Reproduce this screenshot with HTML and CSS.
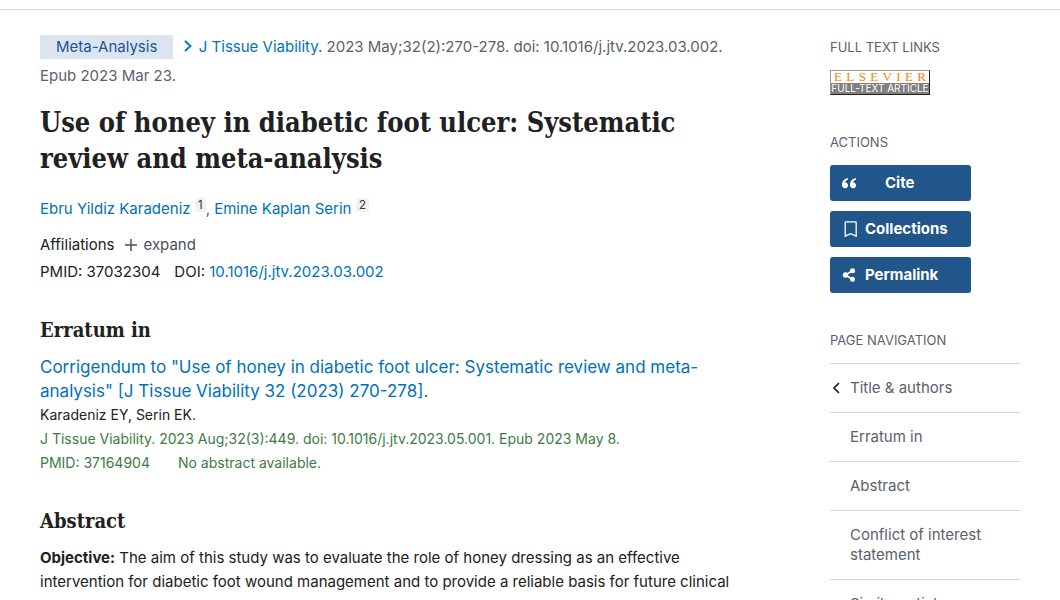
FILE: index.html
```
<!DOCTYPE html>
<html lang="en">
<head>
  <meta charset="utf-8">
  <meta name="viewport" content="width=device-width, initial-scale=1">
  <title>Use of honey in diabetic foot ulcer: Systematic review and meta-analysis</title>
  <link rel="stylesheet" href="styles.css">
</head>
<body>
  <div class="top-rule"></div>
  <div class="page">
    <main class="article">
      <header>
        <div class="citation">
          <span class="pub-type">Meta-Analysis</span>
          <svg class="chevron" viewBox="0 0 8 12" aria-hidden="true"><path d="M1 1l5.500 5L1 11" fill="none" stroke="currentColor" stroke-width="1.800"/></svg>
          <a href="#journal">J Tissue Viability.</a>
          2023 May;32(2):270-278. doi: 10.1016/j.jtv.2023.03.002. Epub&nbsp;2023 Mar 23.
        </div>
        <h1 id="title">Use of honey in diabetic foot ulcer: Systematic review and meta-analysis</h1>
        <div class="authors">
          <a href="#author-1">Ebru Yildiz Karadeniz</a> <sup><a href="#affiliation-1">1</a></sup>,
          <a href="#author-2">Emine Kaplan Serin</a> <sup><a href="#affiliation-2">2</a></sup>
        </div>
        <div class="affiliations">
          Affiliations
          <button type="button" class="expand">
            <svg viewBox="0 0 12 12" aria-hidden="true"><path d="M6 0v12M0 6h12" stroke="currentColor" stroke-width="1.500"/></svg>
            expand
          </button>
        </div>
        <ul class="identifiers">
          <li>PMID: 37032304</li>
          <li>DOI: <a href="#doi">10.1016/j.jtv.2023.03.002</a></li>
        </ul>
      </header>

      <section id="erratum">
        <h2>Erratum in</h2>
        <a class="docsum-title" href="#corrigendum">Corrigendum to "Use of honey in diabetic foot ulcer: Systematic review and meta-analysis" [J Tissue Viability 32 (2023) 270-278].</a>
        <div class="docsum">Karadeniz EY, Serin EK.</div>
        <div class="docsum green">J Tissue Viability. 2023 Aug;32(3):449. doi: 10.1016/j.jtv.2023.05.001. Epub 2023 May 8.</div>
        <div class="docsum green ids"><span>PMID: 37164904</span><span>No abstract available.</span></div>
      </section>

      <section id="abstract">
        <h2>Abstract</h2>
        <p><strong>Objective:</strong> The aim of this study was to evaluate the role of honey dressing as an effective intervention for diabetic foot wound management and to provide a reliable basis for future clinical</p>
      </section>
    </main>

    <aside class="sidebar">
      <section>
        <h3>Full text links</h3>
        <a class="elsevier" href="#full-text">
          <span class="elsevier-name"><span>E</span><span>L</span><span>S</span><span>E</span><span>V</span><span>I</span><span>E</span><span>R</span></span>
          <span class="elsevier-label">FULL-TEXT ARTICLE</span>
        </a>
      </section>

      <section>
        <h3>Actions</h3>
        <div class="actions">
          <button type="button" class="action centered">
            <svg viewBox="0 0 16 16" aria-hidden="true"><path d="M6.600 3C3.300 3.800 1 6.300 1 9.800 1 12 2.200 13.300 4 13.300s3-1.200 3-2.900-1.200-2.800-2.800-2.800c.2-1.500 1.300-2.500 3-3zM14.600 3C11.300 3.800 9 6.300 9 9.800c0 2.200 1.200 3.500 3 3.500s3-1.200 3-2.900-1.200-2.800-2.800-2.800c.2-1.500 1.300-2.500 3-3z" fill="currentColor"/></svg>
            <span>Cite</span>
          </button>
          <button type="button" class="action">
            <svg viewBox="0 0 16 16" aria-hidden="true"><path d="M5 .8h9.400a.8.800 0 0 1 .8.800v13.600L9.700 12.600l-5.500 2.600V1.600A.8.800 0 0 1 5 .8z" fill="none" stroke="currentColor" stroke-width="1.300"/></svg>
            <span>Collections</span>
          </button>
          <button type="button" class="action">
            <svg viewBox="0 0 16 16" aria-hidden="true"><path d="M11.500 3.700L4.500 8l7 4.300" fill="none" stroke="currentColor" stroke-width="1.700"/><g fill="currentColor"><circle cx="11.500" cy="3.700" r="2.500"/><circle cx="4.500" cy="8" r="2.700"/><circle cx="11.500" cy="12.300" r="2.500"/></g></svg>
            <span>Permalink</span>
          </button>
        </div>
      </section>

      <section>
        <h3>Page navigation</h3>
        <nav aria-label="Page navigation">
          <ul>
            <li><a href="#title"><svg viewBox="0 0 8 12" aria-hidden="true"><path d="M7 1L2 6l5 5" fill="none" stroke="currentColor" stroke-width="1.700"/></svg>Title &amp; authors</a></li>
            <li><a href="#erratum">Erratum in</a></li>
            <li><a href="#abstract">Abstract</a></li>
            <li><a href="#conflict">Conflict of interest statement</a></li>
            <li><a href="#similar">Similar articles</a></li>
          </ul>
        </nav>
      </section>
    </aside>
  </div>
</body>
</html>
```
FILE: styles.css
```
* {
  box-sizing: border-box;
}

body {
  margin: 0;
  background: #fff;
  color: #212121;
  font-family: Inter, Roboto, sans-serif;
  font-size: 15px;
  line-height: 24px;
}

a {
  color: #0071bc;
  text-decoration: none;
}

a:hover {
  text-decoration: underline;
}

button {
  font: inherit;
  cursor: pointer;
}

.top-rule {
  height: 10px;
  border-bottom: 1px solid #d6d7d9;
}

.page {
  display: grid;
  grid-template-columns: minmax(0, 1fr) 190px;
  gap: 80px;
  padding: 22px 40px;
}

/* article */
.citation {
  line-height: 29px;
  color: #5b616b;
}

.pub-type {
  display: inline-block;
  padding: 0 16px;
  margin-right: 6px;
  line-height: 24px;
  background: #dce4ef;
  color: #205493;
}

.chevron {
  width: 8px;
  height: 12px;
  margin-right: 3px;
  color: #0071bc;
}

h1,
h2 {
  margin: 0;
  font-family: "DejaVu Serif Condensed", "DejaVu Serif", serif;
  font-weight: 700;
}

h1 {
  margin-top: 15px;
  font-size: 27px;
  line-height: 36px;
}

h2 {
  margin: 32px 0 11px;
  font-size: 20px;
  line-height: 28px;
}

.authors {
  margin-top: 20px;
  color: #5b616b;
}

sup {
  display: inline-block;
  padding: 0 3px;
  font-size: 12px;
  line-height: 14px;
  vertical-align: 5px;
  background: #f1f1f1;
  border-radius: 2px;
}

sup a {
  color: #323a45;
}

.affiliations {
  display: flex;
  align-items: center;
  gap: 10px;
  margin-top: 12px;
}

.expand {
  display: flex;
  align-items: center;
  gap: 7px;
  padding: 0;
  border: 0;
  background: none;
  color: #494f5b;
}

.expand svg {
  width: 12px;
  height: 12px;
}

.identifiers {
  display: flex;
  gap: 14px;
  margin: 3px 0 0;
  padding: 0;
  list-style: none;
}

.docsum-title {
  display: block;
  font-size: 17px;
}

.docsum {
  font-size: 14px;
}

.green {
  color: #3e7b45;
}

.ids {
  display: flex;
  gap: 28px;
}

p {
  margin: 0;
}

/* sidebar */
.sidebar {
  padding-top: 5px;
}

.sidebar section + section {
  margin-top: 37px;
}

h3 {
  margin: 0 0 13px;
  font-size: 13px;
  font-weight: 400;
  line-height: 20px;
  text-transform: uppercase;
  color: #5b616b;
}

.elsevier {
  display: block;
  width: 100px;
  border: 1px solid #999;
  border-right-color: #222;
  border-bottom-color: #222;
}

.elsevier-name {
  display: flex;
  justify-content: space-between;
  padding: 0 3px;
  font-family: "Liberation Serif", serif;
  font-size: 13px;
  line-height: 12px;
  color: #ff7f00;
}

.elsevier-label {
  display: block;
  font-size: 10px;
  line-height: 11px;
  text-align: center;
  white-space: nowrap;
  background: #808080;
  color: #fff;
}

.actions {
  display: flex;
  flex-direction: column;
  align-items: flex-start;
  gap: 10px;
}

.action {
  display: grid;
  grid-template-columns: 16px 1fr;
  align-items: center;
  gap: 8px;
  width: 141px;
  height: 36px;
  padding: 0 11px;
  border: 0;
  border-radius: 3px;
  background: #205689;
  color: #fff;
  font-weight: 700;
  text-align: left;
}

.action svg {
  width: 16px;
  height: 16px;
}

.centered span {
  padding-left: 20px;
}

nav ul {
  margin: 0;
  padding: 0;
  list-style: none;
}

nav li {
  border-top: 1px solid #d6d7d9;
}

nav a {
  display: block;
  position: relative;
  padding: 14px 20px;
  line-height: 20px;
  color: #5b616b;
}

nav svg {
  position: absolute;
  left: 2px;
  top: 18px;
  width: 8px;
  height: 12px;
  color: #212121;
}
```
